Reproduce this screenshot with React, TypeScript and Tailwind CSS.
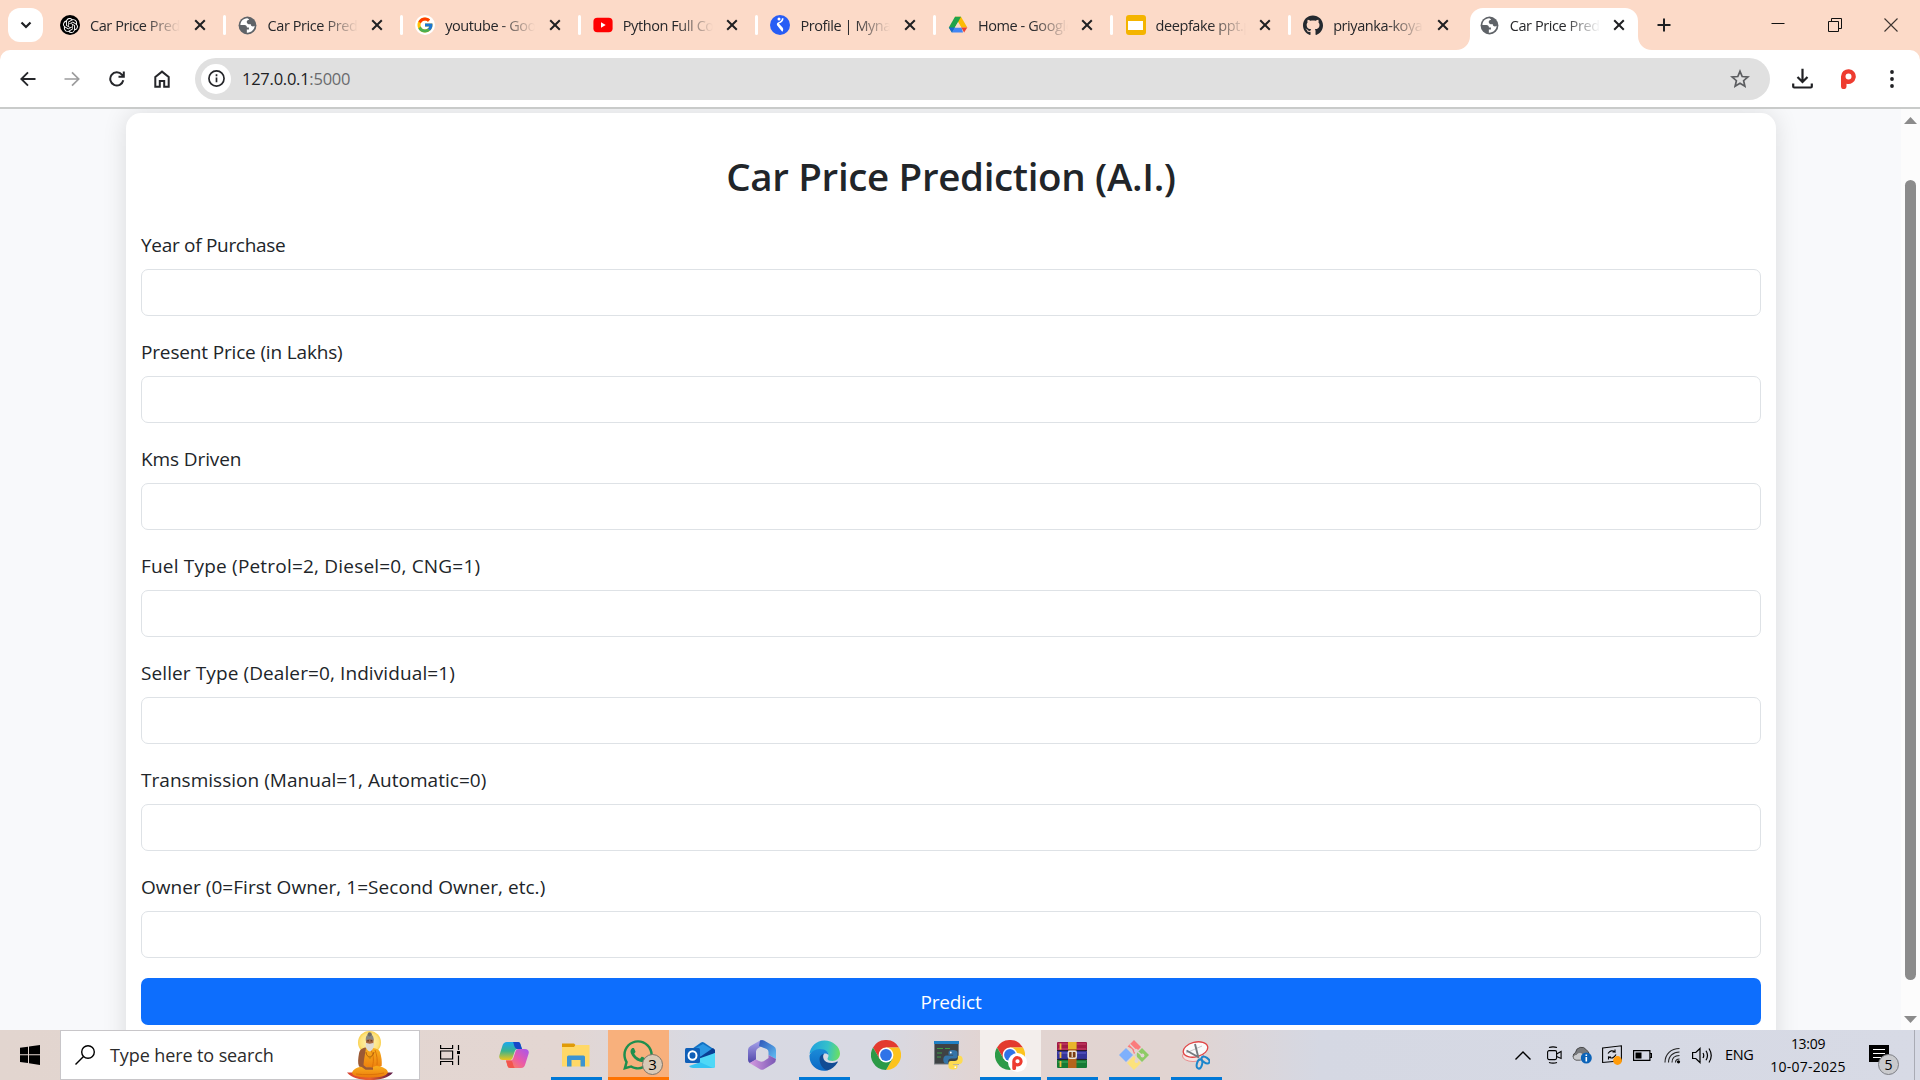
import React from "react";
import { FcGoogle } from "react-icons/fc";
import { FaGithub, FaWhatsapp } from "react-icons/fa";
import { SiOpenai } from "react-icons/si";

const Globe = () => (
  <svg viewBox="0 0 20 20" className="size-[19px]">
    <circle cx="10" cy="10" r="9.4" fill="#5f6368" />
    <path d="M9.6 2.4C5.5 2.6 2.6 5.7 2.5 9.6h4.3c1.7 0 2.6 1 2.6 2.5h2.1v2.2H9.3v3.2c4.6.3 8-3 8.2-7.2-1 .8-2.300.9-3.300.2-.7-.5-.9-1.300-1-2-1.800.3-4-.3-4-2.300 0-1.400 1-2 2.300-2 .2-.9-.7-1.500-1.900-1.800z" fill="#fff" />
    <path d="M11.600 2.500c2.400.5 4.500 2.100 5.400 4.600-.9 1.100-2.300 1.500-3.200.8-.6-.6-.6-1.400-1.800-1.400-1 0-1.400-.9-.8-1.500.6-.6.8-1.500.4-2.500z" fill="#5f6368" />
  </svg>
);

const OpenAi = () => (
  <span className="flex size-5 items-center justify-center rounded-full bg-black">
    <SiOpenai className="size-[15px] text-white" />
  </span>
);

const GoogleIcon = () => (
  <span className="flex size-5 items-center justify-center rounded-full bg-white">
    <FcGoogle className="size-[18px]" />
  </span>
);

const YouTube = () => (
  <svg viewBox="0 0 20 20" className="size-5">
    <rect x="0.400" y="2.700" width="19.200" height="14.600" rx="4" fill="#f00" />
    <path d="M8 7.300v5.400l4.700-2.700z" fill="#fff" />
  </svg>
);

const Mynaukri = () => (
  <svg viewBox="0 0 20 20" className="size-5">
    <circle cx="10" cy="10" r="10" fill="#275df5" />
    <circle cx="9" cy="4" r="1.500" fill="#fff" />
    <path d="M13.500 3.200c.2 2.600-1.700 4.600-4.600 5.400l3.800 4.200c.8 1 .7 3.100-.5 4L7.200 10.400C6.500 9.400 6.900 8 8 7.500c2.500-1 3.800-2.300 3.900-4.300z" fill="#fff" />
  </svg>
);

const Drive = () => (
  <svg viewBox="0 0 20 20" className="size-5">
    <path d="M7 1.700h6l6.300 10.800h-6z" fill="#fbbc04" />
    <path d="M7 1.700h3.200L13 1.700 10 7.200 4 17.500.8 12.500z" fill="#1fa34a" />
    <path d="M6.700 12.500h6.800l1.500 5H3.900z" fill="#4285f4" />
    <path d="M3.900 17.500.8 12.500h6z" fill="#1967d2" />
    <path d="M13.300 12.500h6l-3.200 5z" fill="#ea4335" />
    <path d="M10 7.200l3.200 5.300H6.900z" fill="#fcdac8" />
  </svg>
);

const Slides = () => (
  <span className="flex size-5 items-center justify-center rounded-[3px] bg-[#f4b400]">
    <span className="h-[9px] w-[15px] bg-white" />
  </span>
);

const tabs = [
  { title: "Car Price Prediction", icon: <OpenAi /> },
  { title: "Car Price Prediction", icon: <Globe /> },
  { title: "youtube - Google", icon: <GoogleIcon /> },
  { title: "Python Full Course", icon: <YouTube /> },
  { title: "Profile | Mynaukri", icon: <Mynaukri /> },
  { title: "Home - Google", icon: <Drive /> },
  { title: "deepfake ppt.p", icon: <Slides /> },
  { title: "priyanka-koyal", icon: <FaGithub className="size-[21px] text-[#24292f]" /> },
];

const Cross = () => (
  <svg viewBox="0 0 12 12" className="size-3 shrink-0" stroke="#1f2023" strokeWidth="2">
    <path d="M1.200 1.200l9.600 9.600M10.800 1.200L1.200 10.800" />
  </svg>
);

const TabTitle = ({ children }: { children: React.ReactNode }) => (
  <span className="ml-[10px] w-[90px] overflow-hidden pt-0.5 text-[14.500px] leading-5 tracking-[-0.420px] whitespace-nowrap text-[#26272a] [mask-image:linear-gradient(to_right,#000_60%,transparent_100%)]">
    {children}
  </span>
);

function TabStrip() {
  return (
    <div className="flex h-[50px] items-start bg-[#fcdac8]">
      <div className="mt-2 ml-2 flex h-[34px] w-[35px] shrink-0 items-center justify-center rounded-xl bg-white">
        <svg viewBox="0 0 12 8" className="h-2 w-3" fill="none" stroke="#1f2023" strokeWidth="2.200">
          <path d="M1.500 1.500L6 6l4.500-4.500" />
        </svg>
      </div>
      <div className="ml-[6px] flex h-[50px]">
        {tabs.map((t, i) => (
          <div key={i} className="flex h-[50px] w-[177.600px] items-center pl-[11px]">
            <span className="flex w-5 justify-center">{t.icon}</span>
            <TabTitle>{t.title}</TabTitle>
            <span className="ml-[13.500px] flex">
              <Cross />
            </span>
            {i < 7 && <span className="ml-[17px] h-5 w-[3px] rounded-full bg-white" />}
          </div>
        ))}
      </div>
      <div className="flex items-end self-end">
        <svg viewBox="0 0 14 14" className="-ml-[14px] size-[14px]">
          <path d="M14 0v14H0C8 14 14 8 14 0z" fill="#fff" />
        </svg>
        <div className="flex h-[42px] w-[168px] items-center rounded-t-[13px] bg-white pb-2 pl-[10px]">
          <span className="flex w-5 justify-center">
            <Globe />
          </span>
          <TabTitle>Car Price Prediction</TabTitle>
          <span className="ml-[13px] flex">
            <Cross />
          </span>
        </div>
        <svg viewBox="0 0 14 14" className="size-[14px]">
          <path d="M0 0v14h14C6 14 0 8 0 0z" fill="#fff" />
        </svg>
      </div>
      <svg viewBox="0 0 14 14" className="mt-[18px] ml-[5px] size-[14px]" stroke="#1f2023" strokeWidth="2">
        <path d="M7 .5v13M.5 7h13" />
      </svg>
      <div className="mt-[18px] mr-[22px] ml-auto flex gap-[42.500px]">
        <svg viewBox="0 0 14 14" className="size-[14px]" stroke="#111">
          <path d="M.5 5.500h13" />
        </svg>
        <svg viewBox="0 0 14 14" className="size-[14px]" stroke="#111" fill="none">
          <path d="M.5 3.500h10v10H.5zM3.500 3.500v-3h10v10h-3" />
        </svg>
        <svg viewBox="0 0 14 14" className="size-[14px]" stroke="#3c3430" strokeWidth="1.100">
          <path d="M.5.5l13 13M13.500.5l-13 13" />
        </svg>
      </div>
    </div>
  );
}

function Toolbar() {
  return (
    <div className="h-[59px] bg-[#fcdac8]">
      <div className="flex h-full items-center rounded-t-[10px] border-b-2 border-[#c9cbca] bg-white pl-[20px]">
        <svg viewBox="0 0 16 16" className="size-4" fill="none" stroke="#25262a" strokeWidth="1.900">
          <path d="M15.500 8H1.500M8 1.300L1.300 8 8 14.700" />
        </svg>
        <svg viewBox="0 0 16 16" className="ml-[28px] size-4" fill="none" stroke="#9c9c9d" strokeWidth="1.700">
          <path d="M.5 8h14M8 1.300L14.700 8 8 14.700" />
        </svg>
        <svg viewBox="0 0 16 16" className="ml-[29px] size-4" fill="none" stroke="#25262a" strokeWidth="2">
          <path d="M14.300 9.300A6.600 6.600 0 1 1 12.900 3.600L14.500 5.500M14.800.5v5.300H9.500" />
        </svg>
        <svg viewBox="0 0 16 18" className="ml-[29px] h-[18px] w-4" fill="none" stroke="#25262a" strokeWidth="2">
          <path d="M1.300 7L8 1.600 14.700 7v9.700H10.200V11H5.800v5.700H1.300z" />
        </svg>
        <div className="ml-[25px] flex h-[42px] w-[1575px] items-center rounded-full bg-[#e0e0e0] pl-[6px]">
          <span className="flex size-[30px] items-center justify-center rounded-full bg-white">
            <svg viewBox="0 0 18 18" className="size-[17px]" fill="none" stroke="#25262a" strokeWidth="1.800">
              <circle cx="9" cy="9" r="8" />
              <path d="M9 8v5M9 4.600v2" />
            </svg>
          </span>
          <span className="ml-[11px] pt-0.5 text-[16.500px] tracking-[-0.250px] text-[#202124]">
            127.0.0.1<span className="text-[#6a6b6e]">:5000</span>
          </span>
          <svg viewBox="0 0 20 20" className="mr-5 ml-auto size-5" fill="none" stroke="#5c5d60" strokeWidth="1.700">
            <path d="M10 2.300l2.200 5.200 5.700.5-4.300 3.700 1.300 5.600L10 14.300l-4.900 3 1.300-5.600L2.100 8l5.700-.5z" />
          </svg>
        </div>
        <svg viewBox="0 0 21 21" className="ml-[22px] size-[21px]" fill="none" stroke="#202124" strokeWidth="2.200">
          <path d="M10.500.8v13M5.500 9l5 5 5-5M1.200 15.500v3q0 1 1 1h16.600q1 0 1-1v-3" />
        </svg>
        <svg viewBox="0 0 15 20" className="ml-7 h-5 w-[15px]">
          <path d="M0 7.500a7.400 7.400 0 1 1 5.500 7.200v2.500A2.700 2.700 0 0 1 0 17.500zM7.500 4.500a3 3 0 1 0 .01 6 3 3 0 0 0-.01-6z" fill="#ee3c30" fillRule="evenodd" />
        </svg>
        <svg viewBox="0 0 4 18" className="ml-[34px] h-[18px] w-1" fill="#202124">
          <circle cx="2" cy="2" r="1.900" />
          <circle cx="2" cy="9" r="1.900" />
          <circle cx="2" cy="16" r="1.900" />
        </svg>
      </div>
    </div>
  );
}

const fields = [
  { label: "Year of Purchase", tracking: "tracking-[-0.300px]" },
  { label: "Present Price (in Lakhs)", tracking: "tracking-[-0.160px]" },
  { label: "Kms Driven", tracking: "tracking-[-0.100px]" },
  { label: "Fuel Type (Petrol=2, Diesel=0, CNG=1)", tracking: "tracking-[0.200px]" },
  { label: "Seller Type (Dealer=0, Individual=1)", tracking: "tracking-[0.100px]" },
  { label: "Transmission (Manual=1, Automatic=0)", tracking: "tracking-[0.030px]" },
  { label: "Owner (0=First Owner, 1=Second Owner, etc.)", tracking: "tracking-[0.040px]" },
];

function Page() {
  return (
    <div className="flex min-h-0 flex-1 overflow-hidden bg-[#f8f9fb]">
      <div className="min-w-0 flex-1 overflow-hidden pt-1 pr-[125px] pl-[126px]">
        <form className="h-[1000px] rounded-[15px] bg-white px-[15px] shadow-[0_0_25px_rgba(0,0,0,0.12)]">
          <h2 className="pt-[39px] pb-[29px] text-center text-[38.500px] leading-[48px] font-semibold tracking-[-0.340px] text-[#212529]">
            Car Price Prediction (A.I.)
          </h2>
          {fields.map((f) => (
            <label key={f.label} className="mb-5 block">
              <span className={"mb-[10px] block h-[30px] text-[19px] leading-[33px] text-[#212529] " + f.tracking}>
                {f.label}
              </span>
              <input className="block h-[47px] w-full rounded-[7px] border border-[#dee2e6] bg-white" />
            </label>
          ))}
          <button type="button" className="h-[47px] w-full rounded-[7px] bg-[#0d6efd] pt-0.5 text-[19px] tracking-[-0.150px] text-white">
            Predict
          </button>
        </form>
      </div>
      <div className="flex w-[19px] flex-col items-center bg-[#fcfcfc] pt-2 pb-[7px]">
        <svg viewBox="0 0 13 7" className="h-[7px] w-[13px]" fill="#8b8b8b">
          <path d="M6.500 0L13 7H0z" />
        </svg>
        <div className="mt-[56px] h-[800px] w-[11px] rounded-full bg-[#8b8b8b]" />
        <svg viewBox="0 0 13 7" className="mt-auto h-[7px] w-[13px]" fill="#8b8b8b">
          <path d="M6.500 7L13 0H0z" />
        </svg>
      </div>
    </div>
  );
}

const Sage = () => (
  <svg viewBox="0 0 46 49" className="h-[49px] w-[46px]">
    <defs>
      <radialGradient id="halo">
        <stop offset="0" stopColor="#fff3b8" />
        <stop offset=".8" stopColor="#fde27c" />
        <stop offset="1" stopColor="#f9cf4c" />
      </radialGradient>
      <linearGradient id="robe" x1="0" y1="0" x2="0" y2="1">
        <stop offset="0" stopColor="#f9b01e" />
        <stop offset="1" stopColor="#ec7a0b" />
      </linearGradient>
      <linearGradient id="mat">
        <stop offset="0" stopColor="#d8402f" />
        <stop offset=".5" stopColor="#e8612f" />
        <stop offset="1" stopColor="#5a1848" />
      </linearGradient>
    </defs>
    <circle cx="22.500" cy="11.500" r="11.500" fill="url(#halo)" />
    <path d="M0 41.500c8 .5 12-1.500 23-1.500s15 2 23 1.500c-5 5.500-12 7.500-23 7.500S5 47 0 41.500z" fill="url(#mat)" />
    <path d="M18 16.500c-4 1-5.500 3-6 6-.8 5-1.500 9 0 13l7 2 3-20z" fill="#9c5a34" />
    <path d="M19 17h7c4 .5 6 1.500 7 4 1.500 4.500 2 9 1.700 14L27 39H16l1-10z" fill="url(#robe)" />
    <path d="M5 42c1-4 6-6.500 12-6.500 4 1 8 1 12-.5 7 .5 11.500 3 12 6.500-2 4-8 5-18 5S6 45.500 5 42z" fill="url(#robe)" />
    <path d="M12.500 33l6.500 4.500h7" fill="none" stroke="#9c5a34" strokeWidth="2.400" />
    <path d="M24 19c3 6 3 12 1 18M28 19c2 5 2.500 10 2 15M9 43c8 1 20 1 28-1" fill="none" stroke="#d96f08" strokeWidth=".9" />
    <rect x="19" y="6" width="7.500" height="9" rx="3" fill="#a9673f" />
    <path d="M18.800 10c-.3-5 1-6.500 3.900-6.500s4.200 1.500 3.900 6.500c-.8-2.500-7-2.500-7.800 0z" fill="#8a8680" />
    <circle cx="22.700" cy="3.300" r="2.100" fill="#6f6b66" />
    <path d="M20.300 9.800h1.600M23.600 9.800h1.600" stroke="#40261a" strokeWidth=".9" />
    <path d="M18.900 11.500c1.200 1.500 6.500 1.500 7.700 0 .8 4-.7 8-3.800 9-3.200-1-4.700-5-3.900-9z" fill="#dedad2" />
    <path d="M19 21c.5 6.500 6.500 6.500 8 0" fill="none" stroke="#a85c0c" strokeWidth=".9" />
    <circle cx="23" cy="26.500" r="1.200" fill="#c9840e" />
  </svg>
);

const Copilot = () => (
  <svg viewBox="0 0 30 28" className="h-7 w-[30px]">
    <defs>
      <linearGradient id="cpA" x1="0" y1="0" x2="0" y2="1">
        <stop offset="0" stopColor="#1aa7ee" />
        <stop offset=".5" stopColor="#3bb38e" />
        <stop offset="1" stopColor="#f0c419" />
      </linearGradient>
      <linearGradient id="cpB" x1="1" y1="0" x2="0" y2="1">
        <stop offset="0" stopColor="#a457f0" />
        <stop offset=".5" stopColor="#ea5aa8" />
        <stop offset="1" stopColor="#ff8f4a" />
      </linearGradient>
    </defs>
    <path d="M8 1h11c2 0 2.500 2 3 4l1 3h-4c-2 0-3 1-3.500 3l-2 6c-.5 1.500-1.500 2-3 2H4c-3 0-4.500-2-3.500-5l3-9.500C4.300 2.200 5.500 1 8 1z" fill="url(#cpA)" />
    <path d="M14 1h5c2 0 2.500 2 3 4l1 3h-4.500c-2 0-3-2-3.500-4-.3-1.500-.5-2.500-1-3z" fill="#1646c8" />
    <path d="M22 27H11c-2 0-2.500-2-3-4l-1-3.500h4c2 0 3-1 3.500-3l2-6c.5-1.500 1.500-2.500 3-2.500H26c3 0 4.500 2 3.500 5l-3 9.500C25.700 25.800 24.500 27 22 27z" fill="url(#cpB)" />
    <path d="M7 19.500h4c2 0 2.500 1.500 3 3.500.5 2 1 3.500 2 4h-5c-2 0-2.500-2-3-4z" fill="#f2564d" />
  </svg>
);

const Explorer = () => (
  <svg viewBox="0 0 28 24" className="h-6 w-7">
    <path d="M0 .5h12l1.500 1.500-1.500 3H0z" fill="#e09a06" />
    <path d="M0 4h12l2-2h13.500v21.500H0z" fill="#ffd867" />
    <path d="M5 23.500V14a1.500 1.500 0 0 1 1.500-1.500h15A1.500 1.500 0 0 1 23 14v9.500h-4.500V17h-9v6.500z" fill="#3c94d2" />
  </svg>
);

const WhatsApp = () => (
  <span className="relative flex">
    <FaWhatsapp className="size-[34px] text-[#1f8f4e]" />
    <span className="absolute top-[16px] left-[21px] flex size-[21px] items-center justify-center rounded-full border border-[#7d7468] bg-[#d8c9b6] text-[15px] text-black">3</span>
  </span>
);

const Outlook = () => (
  <svg viewBox="0 0 30 28" className="h-7 w-[30px]">
    <path d="M4 10L16 1.500Q17.500.6 19 1.500L30 9v4L17 20 4 16z" fill="#1272c4" />
    <path d="M9 8l9-5 10 6-11 8z" fill="#2c98e4" />
    <path d="M13 22l17-12.500V25q0 2-2 2H8q-3 0-4-2z" fill="#35c4f3" />
    <path d="M15 16L28 7l2 2v3L16 20z" fill="#0a3f94" />
    <path d="M10 19l18 8q2 0 2-2V12z" fill="#4fd8f7" />
    <rect x="0" y="7" width="15" height="15" rx="1.500" fill="#0f5fb8" />
    <ellipse cx="7.500" cy="14.500" rx="4" ry="4.300" fill="none" stroke="#fff" strokeWidth="2" />
  </svg>
);

const M365 = () => (
  <svg viewBox="0 0 28 30" className="h-[30px] w-7">
    <defs>
      <linearGradient id="mA" x1="0" y1="0" x2="0" y2="1">
        <stop offset="0" stopColor="#a9a4ec" />
        <stop offset="1" stopColor="#4f45a8" />
      </linearGradient>
      <linearGradient id="mB" x1="0" y1="0" x2="1" y2="1">
        <stop offset="0" stopColor="#2c54b8" />
        <stop offset="1" stopColor="#62c0f4" />
      </linearGradient>
      <linearGradient id="mC" x1="0" y1="0" x2="1" y2="0">
        <stop offset="0" stopColor="#d59ae0" />
        <stop offset="1" stopColor="#7a58b5" />
      </linearGradient>
    </defs>
    <path d="M13 0L2.500 6Q0 7.500 0 10v10q0 2 2 3.300L8 19.500v-8q0-2 2-3.200l4-2.300z" fill="url(#mA)" />
    <path d="M12 .5q2-1 4 0L25.500 6Q28 7.500 28 10v9l-7.500-4v-3q0-2-1.800-3L11 6z" fill="url(#mB)" />
    <path d="M1.500 23L8 19.500l3 1.500q2.500 1.300 5 0l4.500-3V15l7.500 4q0 3-2.500 4.500L16 29.300q-2 1-4 0z" fill="url(#mC)" />
  </svg>
);

const Edge = () => (
  <svg viewBox="0 0 31 31" className="size-[31px]">
    <defs>
      <linearGradient id="eA" x1="0" y1=".3" x2="1" y2=".4">
        <stop offset="0" stopColor="#1f9fe0" />
        <stop offset=".6" stopColor="#35c1c9" />
        <stop offset="1" stopColor="#6adf63" />
      </linearGradient>
      <linearGradient id="eB" x1="0" y1="0" x2="0" y2="1">
        <stop offset="0" stopColor="#1b8bd8" />
        <stop offset="1" stopColor="#0a68c4" />
      </linearGradient>
    </defs>
    <path d="M.5 14C1.500 6 7.500.5 15.500.5S31 6.500 31 13.500c0 4.500-3.500 7.500-7.500 7.500-3 0-5-1-5-2.300 0-1 1-1.500 1-3.500 0-3-3-5-7-5-6 0-10 2-12 3.800z" fill="url(#eA)" />
    <path d="M.5 15.500C1.500 12 5.500 9 11 9c5.500 0 8.500 3 8.500 6.200-1-1.700-3-2.200-4.500-1.500-5 3-3 14 4 16.500-9 2.500-19-4-18.500-14.700z" fill="url(#eB)" />
    <path d="M10.500 19c0-3 2-5 4.500-5.300-1.800 2-1.500 9.300 8 9.300 2.500 0 4-.8 5-1.500.7-.3 1 .3.700.8C26 26.700 22.500 29.500 19 30.200c-4.500.3-8.500-5.700-8.500-11.200z" fill="#114b94" />
  </svg>
);

const Chrome = ({ children }: { children?: React.ReactNode }) => (
  <span className="relative flex">
    <svg viewBox="0 0 30 30" className="size-[30px]">
      <path d="M2 7.500A15 15 0 0 1 28 7.500H15L8.500 18.700z" fill="#e33b2e" />
      <path d="M28 7.500A15 15 0 0 1 15 30l6.500-11.300L15 7.500z" fill="#fcc31e" />
      <path d="M2 7.500A15 15 0 0 0 15 30l6.500-11.300H8.500z" fill="#2c9a47" />
      <circle cx="15" cy="15" r="7.400" fill="#fff" />
      <circle cx="15" cy="15" r="5.900" fill="#2f73e8" />
    </svg>
    {children}
  </span>
);

const ChromeProfile = () => (
  <Chrome>
    <span className="absolute top-[13px] left-[13px] flex size-[19px] items-center justify-center rounded-full bg-white">
      <svg viewBox="0 0 15 20" className="h-[14px] w-[11px]">
        <path d="M0 7.500a7.400 7.400 0 1 1 5.500 7.200v2.500A2.700 2.700 0 0 1 0 17.500zM7.500 4.500a3 3 0 1 0 .01 6 3 3 0 0 0-.01-6z" fill="#ee3c30" fillRule="evenodd" />
      </svg>
    </span>
  </Chrome>
);

const PythonTerminal = () => (
  <svg viewBox="0 0 34 29" className="ml-1.5 h-[29px] w-[34px]">
    <rect x=".5" y=".5" width="24" height="22.500" fill="#3e4244" stroke="#7a8084" />
    <rect width="25" height="3" fill="#1f7fc4" />
    <path d="M3 7.500h6M11 7.500h5M3 12h5M3 16h4" stroke="#3f9b46" strokeWidth="1.200" />
    <g transform="translate(1 0)">
      <path d="M17.500 9c-3 0-4 1-4 2.800v2h4.600v.8h-6.600c-2 0-3.200 1.600-3.200 4.200s1.200 4 3.200 4h1.600v-2.400c0-1.800 1.400-3 3.200-3h4c1.400 0 2.200-1 2.200-2.400v-3.200C22.500 10 21 9 17.500 9z" fill="#3474a8" />
      <path d="M18.500 28.500c3 0 4-1 4-2.800v-2h-4.600v-.8h6.600c2 0 3.200-1.600 3.200-4.200s-1.200-4-3.200-4h-1.600v2.400c0 1.800-1.400 3-3.200 3h-4c-1.400 0-2.200 1-2.200 2.400v3.200c0 1.800 1.500 2.800 5 2.800z" fill="#fddb52" />
      <circle cx="15.800" cy="11.500" r=".9" fill="#fff" />
      <circle cx="20.300" cy="26.200" r=".9" fill="#fff" />
    </g>
  </svg>
);

const WinRar = () => (
  <svg viewBox="0 0 30 26" className="h-[26px] w-[30px]">
    <rect y="0" width="30" height="8.500" rx="1" fill="#a11b45" />
    <rect y="8.800" width="30" height="8.500" rx="1" fill="#34349a" />
    <rect y="17.500" width="30" height="8.500" rx="1" fill="#157a35" />
    <path d="M1 2h28M1 7h28" stroke="#d94f78" strokeWidth=".8" />
    <path d="M1 11h28" stroke="#6a6ad8" strokeWidth=".9" />
    <path d="M1 20h28" stroke="#49b868" strokeWidth=".9" />
    <path d="M0 8.600h30M0 17.400h30" stroke="#1c1420" />
    <path d="M3.500 1.500v6M3.500 10v6M3.500 19v6" stroke="#f0b93a" strokeWidth="1.800" />
    <rect x="11" y="0" width="8.500" height="26" fill="#b5651d" />
    <rect x="11" y="0" width="8.500" height="7" fill="#e8b52c" />
    <rect x="11.300" y="9.300" width="8" height="7" rx="1.500" fill="#7a3d10" stroke="#e9e5da" strokeWidth="1.500" />
    <path d="M15.200 10v5" stroke="#e9e5da" strokeWidth="1.200" />
  </svg>
);

const Git = () => (
  <svg viewBox="0 0 30 30" className="size-[30px]">
    <path d="M15 0l7 7-7 7-2-5-4.500-2.500z" fill="#fb7c7c" />
    <path d="M0 15l7-7 7 7-7 7z" fill="#7fb0fc" />
    <path d="M23 8l7 7-7 7-7-7z" fill="#8ecb66" />
    <path d="M15 16l7 7-7 7-7-7z" fill="#fce27c" />
    <path d="M11 4.500l5 5M17 11v11M19 12l4 3.500" stroke="#e2d5d2" strokeWidth="1.500" />
    <circle cx="17" cy="10.800" r="2" fill="#e2d5d2" />
    <circle cx="17.500" cy="21" r="2" fill="#e2d5d2" />
    <circle cx="23.500" cy="15.500" r="1.900" fill="#e2d5d2" />
  </svg>
);

const Snip = () => (
  <svg viewBox="0 0 28 29" className="h-[29px] w-7">
    <ellipse cx="11" cy="15" rx="10.500" ry="5.500" fill="#f4e4e2" stroke="#e88d8d" />
    <ellipse cx="13.500" cy="8.500" rx="12.500" ry="7.300" transform="rotate(-14 13.500 8.500)" fill="#fafafa" stroke="#e04545" strokeWidth="1.300" />
    <path d="M4 12l16-7" stroke="#c9c9cc" />
    <path d="M13 3l3.500 14M4.500 9.500L17 16.500" stroke="#75797e" strokeWidth="1.900" />
    <ellipse cx="17.500" cy="23" rx="2.600" ry="4.700" transform="rotate(15 17.500 23)" fill="none" stroke="#1b86cc" strokeWidth="2" />
    <ellipse cx="23.500" cy="19" rx="2.600" ry="4.500" transform="rotate(-55 23.500 19)" fill="none" stroke="#1b86cc" strokeWidth="2" />
  </svg>
);

const apps = [
  { icon: <Copilot />, cls: "border-transparent w-[51px]", slot: "" },
  { icon: <Explorer />, cls: "border-[#0078d7] w-[51px]", slot: "" },
  { icon: <WhatsApp />, cls: "border-[#ff7300] w-[61px]", slot: "bg-[#f8b07c]" },
  { icon: <Outlook />, cls: "border-transparent w-[51px]", slot: "" },
  { icon: <M365 />, cls: "border-transparent w-[51px]", slot: "" },
  { icon: <Edge />, cls: "border-[#0078d7] w-[51px]", slot: "" },
  { icon: <Chrome />, cls: "border-transparent w-[51px]", slot: "" },
  { icon: <PythonTerminal />, cls: "border-transparent w-[51px]", slot: "" },
  { icon: <ChromeProfile />, cls: "border-[#0078d7] w-[61px]", slot: "bg-[#f3eeec]" },
  { icon: <WinRar />, cls: "border-[#0078d7] w-[51px]", slot: "" },
  { icon: <Git />, cls: "border-[#0078d7] w-[51px]", slot: "" },
  { icon: <Snip />, cls: "border-[#0078d7] w-[51px]", slot: "" },
];

function Tray() {
  return (
    <div className="ml-auto flex h-full items-center text-black">
      <svg viewBox="0 0 16 9" className="h-[9px] w-4" fill="none" stroke="#000" strokeWidth="1.400">
        <path d="M.5 8.500L8 1l7.500 7.500" />
      </svg>
      <svg viewBox="0 0 15 18" className="ml-4 h-[18px] w-[15px]" fill="none" stroke="#000" strokeWidth="1.100">
        <rect x=".6" y="4.600" width="9" height="9" rx="1.500" />
        <path d="M9.600 8l4.500-2.500v7L9.600 10.500M2 1.500Q6 .2 10 1.500M2 16.500q4 1.300 8 0" />
      </svg>
      <svg viewBox="0 0 20 18" className="ml-[10px] h-[18px] w-5">
        <path d="M4 14a4 4 0 0 1-.5-7.500A6 6 0 0 1 14.500 4 5 5 0 0 1 17 8L8 14z" fill="#77797c" stroke="#333" strokeWidth=".8" />
        <path d="M4 14c-4-1-3.500-5.500.5-5.500C6 6 9 6 11 8l4 2-4 4z" fill="#c9cacd" stroke="#555" strokeWidth=".6" />
        <circle cx="14.300" cy="12" r="5.500" fill="#0b63b8" />
        <path d="M14.300 11v4.500M14.300 8.500v1.600" stroke="#fff" strokeWidth="1.600" />
      </svg>
      <svg viewBox="0 0 20 20" className="ml-[10px] h-5 w-5" fill="none" stroke="#000" strokeWidth="1.100">
        <path d="M.6 3L19.400.8v15L.6 17.500zM6 8.500Q9 4 13 7V4.500M13 7h-2.500M14 9.500Q11 15 6.500 12V14.500M6.500 12H9" />
        <circle cx="15.500" cy="15.500" r="4.400" fill="#ff9b0a" stroke="none" />
      </svg>
      <svg viewBox="0 0 19 11" className="ml-[11px] h-[11px] w-[19px]" fill="none" stroke="#000" strokeWidth="1.200">
        <path d="M.6.600h16.300v9.800H.6zM17 3.500h1.400v4H17" />
        <path d="M2.500 2.500h6v6h-6z" fill="#000" stroke="none" />
      </svg>
      <svg viewBox="0 0 17 17" className="ml-[12px] size-[17px]" fill="none" stroke="#222" strokeWidth="1.100">
        <path d="M1 15.500C1 7 7 1.500 15.500 1.500M4.500 15.500C4.500 9 9 5 15.500 5M8 15.500c0-4.500 3-7 7.500-7M11.500 15.500c0-2 1.500-3.500 4-3.500" />
        <circle cx="14.500" cy="14.800" r="1.600" fill="#000" stroke="none" />
      </svg>
      <svg viewBox="0 0 21 17" className="ml-[11px] h-[17px] w-[21px]" fill="none" stroke="#000" strokeWidth="1.200">
        <path d="M.6 5.500h3.200L8 1.500v14l-4.200-4H.6zM11 6q1.500 2.500 0 5M14 3.800q3 4.700 0 9.400M17 1.500q4.500 7 0 14" />
      </svg>
      <span className="ml-[12px] w-[30px] text-[14.500px] tracking-[-0.300px]">ENG</span>
      <span className="ml-[15px] flex w-[76px] flex-col items-center text-[14px] leading-[23px] whitespace-nowrap">
        <span className="tracking-[-0.300px]">13:09</span>
        <span className="tracking-[0.250px]">10-07-2025</span>
      </span>
      <span className="relative ml-[23px] flex">
        <svg viewBox="0 0 20 20" className="size-5">
          <path d="M0 0h20v17h-6l-3 3v-3H0z" fill="#000" />
          <path d="M4 4.500h12M4 8.500h12M4 12.500h8" stroke="#fff" strokeWidth="1.200" />
        </svg>
        <span className="absolute top-[9px] left-[9px] flex size-[21px] items-center justify-center rounded-full border border-[#7c7e84] bg-[#c9cacd] text-[14px]">5</span>
      </span>
      <span className="mr-[5px] ml-[25px] h-full w-px bg-[#a9abb4]" />
    </div>
  );
}

function Taskbar() {
  return (
    <div className="flex h-[50px] shrink-0 items-center bg-[linear-gradient(90deg,#e2d5cf_0px,#e3d6d2_560px,#d8d9e2_700px,#d8d9e3_880px,#e2d4d1_990px,#e1d4d1_1180px,#d5d8e3_1320px,#d7dae5_1920px)]">
      <div className="flex w-[60px] justify-center">
        <svg viewBox="0 0 20 20" className="size-5" fill="#000">
          <path d="M0 2.800L8 1.700v7.600H0zM9 1.500L20 0v9.300H9zM0 10.300h8v7.700L0 17zM9 10.300h11V20L9 18.300z" />
        </svg>
      </div>
      <div className="flex h-[50px] w-[360px] items-center border border-[#c8c6c9] bg-white pl-[14px]">
        <svg viewBox="0 0 20 20" className="size-5" fill="none" stroke="#000" strokeWidth="1.400">
          <circle cx="13" cy="7" r="6.300" />
          <path d="M8.500 11.500L.5 19.500" />
        </svg>
        <span className="ml-[15px] text-[18px] tracking-[-0.100px] text-[#2b2b2b]">Type here to search</span>
        <span className="mr-[26px] ml-auto flex">
          <Sage />
        </span>
      </div>
      <div className="flex w-[63px] pl-5">
        <svg viewBox="0 0 20 20" className="size-5" fill="none" stroke="#000" strokeWidth="1.200">
          <path d="M.6 0v3.500h12V0M.6 20v-3.500h12V20M.6 6h12v8H.6zM18.500 0v5M18.500 10.500V20" />
          <path d="M17 6h3v3h-3z" fill="#000" stroke="none" />
        </svg>
      </div>
      {apps.map((a, i) => (
        <div key={i} className="flex h-[50px] w-[62px] items-center justify-center">
          <div className={"flex h-full items-center justify-center border-b-[3px] " + a.slot + " " + a.cls}>
            <span className="flex pt-[3px]">{a.icon}</span>
          </div>
        </div>
      ))}
      <Tray />
    </div>
  );
}

export default function App() {
  return (
    <div className="flex h-[1080px] w-[1920px] flex-col overflow-hidden bg-white font-['Open_Sans',sans-serif]">
      <TabStrip />
      <Toolbar />
      <Page />
      <Taskbar />
    </div>
  );
}
